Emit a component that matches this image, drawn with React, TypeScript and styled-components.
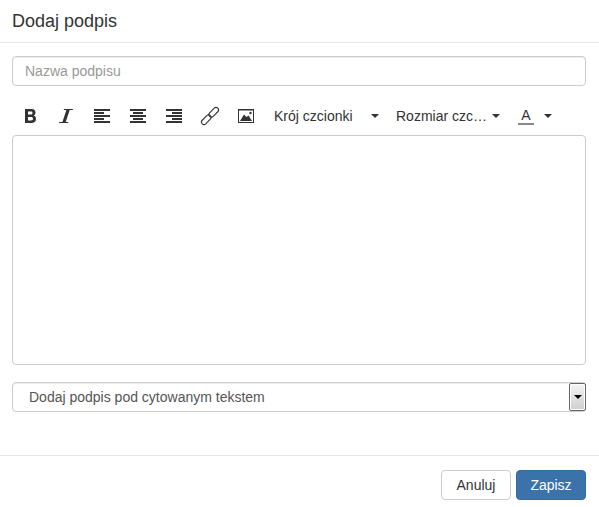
import React from "react";
import styled, {createGlobalStyle} from "styled-components";

const GlobalStyle = createGlobalStyle`
    html, body {
        margin: 0;
        background: #fff;
    }
    body {
        font-family: "Liberation Sans", Arial, sans-serif;
        font-size: 14px;
        color: #333;
    }
    * {
        box-sizing: border-box;
    }
`;

const Modal = styled.div`
    width: 599px;
    height: 507px;
    display: flex;
    flex-direction: column;
    background: #fff;
`;

const Header = styled.div`
    height: 43px;
    padding: 0 12px;
    display: flex;
    align-items: center;
    border-bottom: 1px solid #e5e5e5;
`;

const Title = styled.h4`
    margin: 0;
    font-size: 18px;
    font-weight: 400;
    line-height: 20px;
    color: #333;
`;

const Body = styled.div`
    flex: 1;
    padding: 13px 13px 0 12px;
    display: flex;
    flex-direction: column;
`;

const NameInput = styled.input`
    height: 30px;
    padding: 0 12px;
    border: 1px solid #ccc;
    border-radius: 4px;
    font: inherit;
    box-shadow: inset 0 1px 1px rgba(0, 0, 0, .075);
    &::placeholder {
        color: #999;
    }
`;

const Toolbar = styled.div`
    height: 49px;
    display: flex;
    align-items: center;
    padding-top: 11px;
`;

const IconButton = styled.button`
    width: 36px;
    height: 28px;
    padding: 0;
    border: 0;
    background: none;
    color: #333;
    display: flex;
    align-items: center;
    justify-content: center;
    svg {
        display: block;
        overflow: visible;
    }
`;

const Dropdown = styled.button<{ $width: number; $gap: number }>`
    width: ${p => p.$width}px;
    margin-left: ${p => p.$gap}px;
    height: 28px;
    padding: 0;
    border: 0;
    background: none;
    color: #333;
    font: inherit;
    display: flex;
    align-items: center;
    justify-content: space-between;
    white-space: nowrap;
`;

const Caret = styled.span`
    width: 0;
    height: 0;
    border-top: 4.5px solid #333;
    border-left: 4.5px solid transparent;
    border-right: 4.5px solid transparent;
`;

const ColorLetter = styled.span`
    display: inline-block;
    width: 16px;
    height: 18px;
    line-height: 17px;
    text-align: center;
    border-bottom: 2px solid #888;
`;

const Editor = styled.div`
    height: 230px;
    border: 1px solid #ccc;
    border-radius: 4px;
`;

const SelectWrap = styled.div`
    position: relative;
    margin-top: 17px;
    height: 30px;
`;

const Select = styled.select`
    width: 100%;
    height: 100%;
    padding: 0 16px;
    appearance: none;
    border: 1px solid #ccc;
    border-radius: 4px;
    background: #fff;
    font: inherit;
    color: #555;
    box-shadow: inset 0 1px 1px rgba(0, 0, 0, .075);
`;

const SelectArrow = styled.span`
    position: absolute;
    top: 1px;
    right: 0;
    width: 17px;
    height: 28px;
    border: 1px solid #666;
    border-radius: 2px;
    box-shadow: inset 0 0 0 1px #fff;
    background: linear-gradient(#f4f4f4, #cfcfcf);
    display: flex;
    align-items: center;
    justify-content: center;
    pointer-events: none;
    &::after {
        content: "";
        border-top: 4px solid #000;
        border-left: 4px solid transparent;
        border-right: 4px solid transparent;
    }
`;

const Footer = styled.div`
    height: 52px;
    padding: 14px 13px 0 0;
    display: flex;
    justify-content: flex-end;
    gap: 5px;
    border-top: 1px solid #e5e5e5;
`;

const FooterButton = styled.button<{ $primary?: boolean }>`
    height: 30px;
    padding: 0;
    width: 70px;
    border: 1px solid ${p => p.$primary ? "#2e6da4" : "#ccc"};
    border-radius: 4px;
    background: ${p => p.$primary ? "#3a72a9" : "#fff"};
    color: ${p => p.$primary ? "#fff" : "#333"};
    font: inherit;
`;

const BoldIcon = () => (
    <svg width="11" height="14" viewBox="0 0 11 14">
        <path
            fillRule="evenodd"
            fill="#333"
            d="M0 0 H6.5 C9.5 0 10.5 2 10.5 3.5 C10.5 5 9.8 6 8.7 6.5 C10.3 7 11 8.4 11 10 C11 12.5 9 14 6.5 14 H0 Z M3 2.6 V5.5 H5.8 C7 5.5 7.5 4.8 7.5 4 C7.5 3.1 7 2.6 5.8 2.6 Z M3 8 V11.4 H6 C7.3 11.4 8 10.7 8 9.7 C8 8.7 7.3 8 6 8 Z"
        />
    </svg>
);

const ItalicIcon = () => (
    <svg width="14" height="14" viewBox="0 0 14 14">
        <path d="M5 0 H14 L13.7 1 H10.7 L6.7 13 H9.4 L9.1 14 H0 L0.3 13 H3.4 L7.4 1 H4.7 Z" fill="#333"/>
    </svg>
);

const AlignIcon = ({offsets}: { offsets: number[] }) => (
    <svg width="16" height="14" viewBox="0 0 16 14">
        {[0, 3, 6, 9, 12].map((y, i) => (
            <rect key={y} x={offsets[i]} y={y} width={i % 2 === 0 ? 16 : 10} height="2" fill="#333"/>
        ))}
    </svg>
);

const LinkIcon = () => (
    <svg width="16" height="16" viewBox="0 0 16 16" fill="none" stroke="#333" strokeWidth="1.1">
        <g transform="rotate(45 8 8)">
            <rect x="5.5" y="-3" width="5" height="11.5" rx="2.5"/>
            <rect x="5.5" y="7.5" width="5" height="11.5" rx="2.5"/>
        </g>
    </svg>
);

const PictureIcon = () => (
    <svg width="16" height="14" viewBox="0 0 16 14">
        <rect x="0.5" y="0.5" width="15" height="13" fill="none" stroke="#333"/>
        <path d="M1 1 H15" stroke="#333"/>
        <path d="M2 12 L6 5.5 L8.5 8 L10.5 6.5 L14 12 Z" fill="#333"/>
        <circle cx="12.5" cy="4" r="1.2" fill="#333"/>
    </svg>
);

const App = () => {
    return (
        <Modal>
            <GlobalStyle/>
            <Header>
                <Title>Dodaj podpis</Title>
            </Header>
            <Body>
                <NameInput placeholder="Nazwa podpisu"/>
                <Toolbar>
                    <IconButton><BoldIcon/></IconButton>
                    <IconButton><ItalicIcon/></IconButton>
                    <IconButton><AlignIcon offsets={[0, 0, 0, 0, 0]}/></IconButton>
                    <IconButton><AlignIcon offsets={[0, 3, 0, 3, 0]}/></IconButton>
                    <IconButton><AlignIcon offsets={[0, 6, 0, 6, 0]}/></IconButton>
                    <IconButton><LinkIcon/></IconButton>
                    <IconButton><PictureIcon/></IconButton>
                    <Dropdown $width={105} $gap={10}>Krój czcionki<Caret/></Dropdown>
                    <Dropdown $width={104} $gap={17}>Rozmiar czc…<Caret/></Dropdown>
                    <Dropdown $width={34} $gap={18}><ColorLetter>A</ColorLetter><Caret/></Dropdown>
                </Toolbar>
                <Editor/>
                <SelectWrap>
                    <Select defaultValue="below">
                        <option value="below">Dodaj podpis pod cytowanym tekstem</option>
                    </Select>
                    <SelectArrow/>
                </SelectWrap>
            </Body>
            <Footer>
                <FooterButton>Anuluj</FooterButton>
                <FooterButton $primary>Zapisz</FooterButton>
            </Footer>
        </Modal>
    );
};

export default App;
